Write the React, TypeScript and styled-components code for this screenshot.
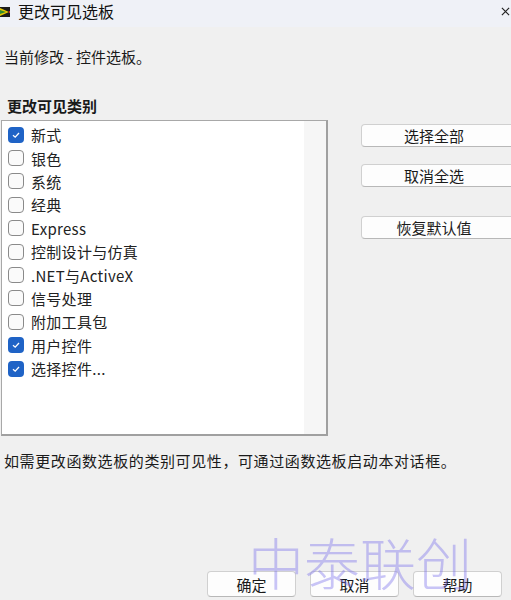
import React from 'react'
import styled, { createGlobalStyle } from 'styled-components'

const GlobalStyle = createGlobalStyle`
  html, body {
    margin: 0;
    padding: 0;
    background: #f0f0f0;
  }
  body {
    font-family: "Noto Sans CJK SC", "Noto Sans", sans-serif;
    color: #1a1a1a;
  }
`

const categories = [
  { name: '新式', on: true },
  { name: '银色', on: false },
  { name: '系统', on: false },
  { name: '经典', on: false },
  { name: 'Express', on: false },
  { name: '控制设计与仿真', on: false },
  { name: '.NET与ActiveX', on: false },
  { name: '信号处理', on: false },
  { name: '附加工具包', on: false },
  { name: '用户控件', on: true },
  { name: '选择控件...', on: true },
]

const App = () => {
  return (
    <>
      <GlobalStyle />
      <Window>
        <TitleBar>
          <AppIcon viewBox="0 0 10 10">
            <rect x="0" y="0" width="10" height="10" fill="#1c1c1c" />
            <polygon points="0,1 9,5 0,9" fill="#e8c800" />
            <polygon points="0,3 6,5 0,7" fill="#2f8a2f" />
            <rect x="9" y="4" width="1" height="2" fill="#d02020" />
          </AppIcon>
          <Title>更改可见选板</Title>
          <CloseX viewBox="0 0 10 10">
            <path d="M1 1 L9 9 M9 1 L1 9" stroke="#222" strokeWidth="1.3" />
          </CloseX>
        </TitleBar>

        <Body>
          <Info>当前修改 - 控件选板。</Info>
          <GroupLabel>更改可见类别</GroupLabel>
          <MainRow>
            <ListBox>
              <Items>
                {categories.map((c) => (
                  <Item key={c.name}>
                    <Check $on={c.on}>
                      {c.on && (
                        <svg width="10" height="10" viewBox="0 0 10 10">
                          <path d="M2 5.2 L4.2 7.2 L8 3" fill="none" stroke="#fff" strokeWidth="1.3" />
                        </svg>
                      )}
                    </Check>
                    <ItemText>{c.name}</ItemText>
                  </Item>
                ))}
              </Items>
              <Track />
            </ListBox>
            <SideButtons>
              <SideButton>选择全部</SideButton>
              <SideButton>取消全选</SideButton>
              <SideButton $gap>恢复默认值</SideButton>
            </SideButtons>
          </MainRow>
          <Hint>如需更改函数选板的类别可见性，可通过函数选板启动本对话框。</Hint>
          <Footer>
            <DialogButton>确定</DialogButton>
            <DialogButton>取消</DialogButton>
            <DialogButton>帮助</DialogButton>
          </Footer>
        </Body>
        <Watermark>中泰联创</Watermark>
      </Window>
    </>
  )
}

export default App

const Window = styled.div`
  position: relative;
  width: 511px;
  height: 600px;
  overflow: hidden;
  background: #f0f0f0;
`

const TitleBar = styled.div`
  height: 27px;
  display: flex;
  align-items: center;
  background: #eff1f7;
`

const AppIcon = styled.svg`
  width: 10px;
  height: 10px;
  flex-shrink: 0;
  margin-top: -4px;
`

const Title = styled.div`
  margin-left: 8px;
  margin-top: -5px;
  font-size: 16px;
  color: #111;
`

const CloseX = styled.svg`
  width: 9px;
  height: 9px;
  margin-left: auto;
  margin-right: 1px;
  margin-top: -4px;
`

const Body = styled.div`
  display: flex;
  flex-direction: column;
`

const Info = styled.div`
  margin: 19px 0 0 4px;
  font-size: 15px;
  line-height: 21px;
`

const GroupLabel = styled.div`
  margin: 28px 0 0 7px;
  font-size: 15px;
  font-weight: 700;
  line-height: 21px;
`

const MainRow = styled.div`
  display: flex;
  margin-top: 4px;
`

const ListBox = styled.div`
  flex-shrink: 0;
  width: 324px;
  height: 313px;
  margin-left: 1px;
  display: flex;
  background: #fff;
  border: 1px solid #a8a8a8;
  border-right: 2px solid #a0a0a0;
  border-bottom: 2px solid #a0a0a0;
`

const Items = styled.div`
  flex: 1;
  padding-top: 2px;
  display: flex;
  flex-direction: column;
`

const Track = styled.div`
  width: 22px;
  background: #f6f6f6;
`

const Item = styled.div`
  height: 23.4px;
  display: flex;
  align-items: center;
  padding-left: 6px;
  gap: 7px;
`

const Check = styled.div<{ $on: boolean }>`
  box-sizing: border-box;
  width: 16px;
  height: 16px;
  border-radius: 4px;
  display: flex;
  align-items: center;
  justify-content: center;
  background: ${(p) => (p.$on ? '#1f63c6' : '#fafafa')};
  border: ${(p) => (p.$on ? 'none' : '1px solid #8a8a8a')};
`

const ItemText = styled.span`
  font-size: 15px;
  letter-spacing: 0.3px;
  color: #222;
`

const SideButtons = styled.div`
  flex-shrink: 0;
  display: flex;
  flex-direction: column;
  margin-left: 33px;
  margin-top: 4px;
  gap: 17px;
`

const SideButton = styled.div<{ $gap?: boolean }>`
  box-sizing: border-box;
  width: 160px;
  height: 23px;
  margin-top: ${(p) => (p.$gap ? '12px' : '0')};
  display: flex;
  align-items: center;
  justify-content: center;
  padding-right: 14px;
  font-size: 15px;
  background: #fdfdfd;
  border: 1px solid #d0d0d0;
  border-bottom-color: #b8b8b8;
  border-radius: 4px;
`

const Hint = styled.div`
  margin: 14px 0 0 4px;
  font-size: 15px;
  letter-spacing: 0.6px;
  line-height: 21px;
`

const Footer = styled.div`
  display: flex;
  gap: 14px;
  margin: 100px 0 0 207px;
`

const DialogButton = styled.div`
  box-sizing: border-box;
  width: 89px;
  height: 26px;
  display: flex;
  align-items: center;
  justify-content: center;
  font-size: 15px;
  background: #fdfdfd;
  border: 1px solid #d0d0d0;
  border-bottom-color: #b8b8b8;
  border-radius: 4px;
`

const Watermark = styled.div`
  position: absolute;
  left: 248px;
  top: 526px;
  font-family: "Noto Sans CJK SC", serif;
  font-weight: 300;
  font-size: 56px;
  line-height: 70px;
  color: rgba(120, 110, 235, 0.4);
  pointer-events: none;
`
